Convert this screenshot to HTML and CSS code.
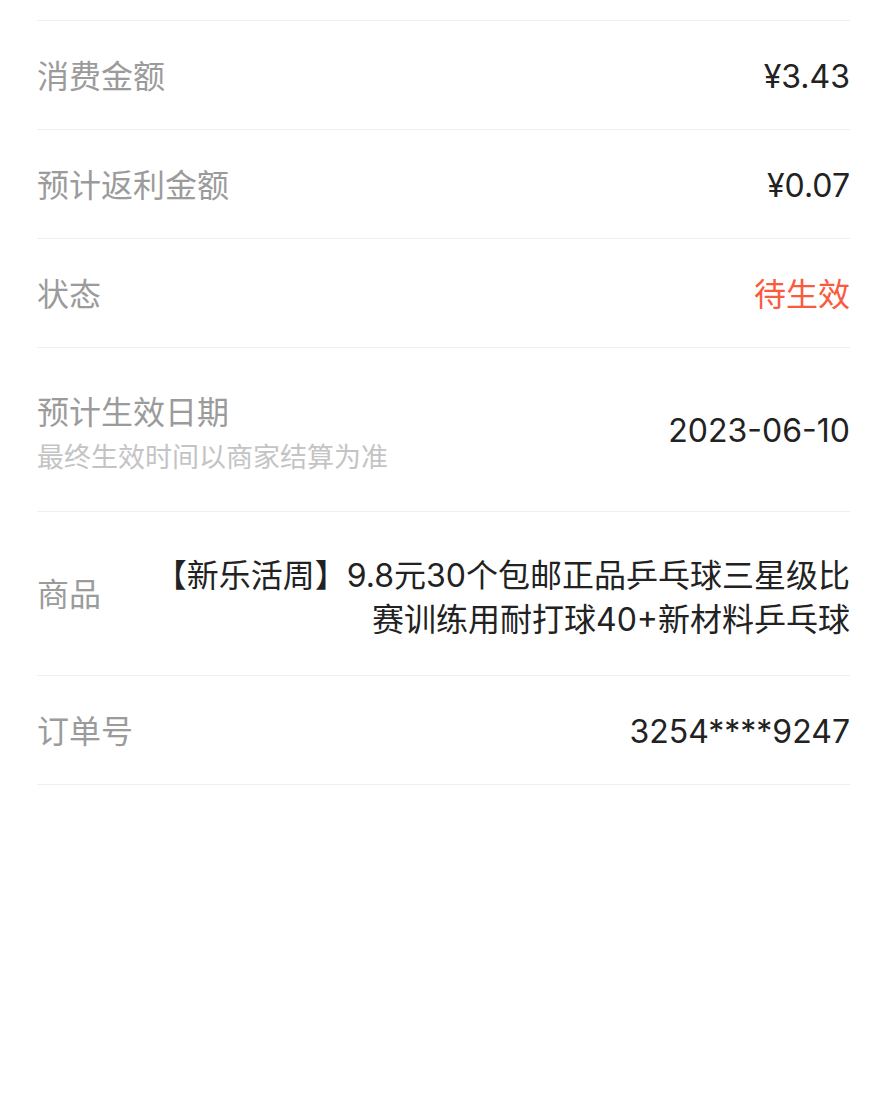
FILE: index.html
```html
<!DOCTYPE html>
<html lang="zh-CN">
<head>
    <meta charset="UTF-8">
    <meta name="viewport" content="width=device-width, initial-scale=1.0">
    <title>订单详情</title>
    <link rel="stylesheet" href="styles.css">
</head>
<body>
    <div class="page">
        <ul class="info-list">
            <li class="info-row">
                <span class="info-label">消费金额</span>
                <span class="info-value">¥3.43</span>
            </li>
            <li class="info-row">
                <span class="info-label">预计返利金额</span>
                <span class="info-value">¥0.07</span>
            </li>
            <li class="info-row">
                <span class="info-label">状态</span>
                <span class="info-value status-pending">待生效</span>
            </li>
            <!-- date row has a hint under the label -->
            <li class="info-row info-row-tall">
                <div class="label-stack">
                    <span class="info-label">预计生效日期</span>
                    <span class="info-hint">最终生效时间以商家结算为准</span>
                </div>
                <span class="info-value">2023-06-10</span>
            </li>
            <li class="info-row info-row-tall">
                <span class="info-label">商品</span>
                <span class="info-value product-name">【新乐活周】9.8元30个包邮正品乒乓球三星级比赛训练用耐打球40+新材料乒乓球</span>
            </li>
            <li class="info-row">
                <span class="info-label">订单号</span>
                <span class="info-value">3254****9247</span>
            </li>
        </ul>
    </div>
</body>
</html>
```

FILE: styles.css
```css
* {
    margin: 0;
    padding: 0;
    box-sizing: border-box;
}

body {
    font-family: Inter, "Noto Sans CJK SC", sans-serif;
    background-color: #fff;
    color: #222;
}

.page {
    padding: 20px 37px 0;
}

.info-list {
    list-style: none;
    border-top: 1px solid #efefef;
}

.info-row {
    display: flex;
    justify-content: space-between;
    align-items: center;
    min-height: 109px;
    padding-top: 3px;
    border-bottom: 1px solid #efefef;
    font-size: 32px;
    line-height: 44px;
}

.info-row-tall {
    min-height: 164px;
}

.info-label {
    color: #9b9b9b;
    flex-shrink: 0;
}

.info-value {
    color: #222;
    text-align: right;
}

.status-pending {
    color: #fa5a3e;
}

.label-stack {
    display: flex;
    flex-direction: column;
    padding-top: 9px;
}

.info-hint {
    font-size: 27px;
    line-height: 46px;
    color: #c4c4c4;
}

.product-name {
    max-width: 700px;
    padding-top: 6px;
}
```
